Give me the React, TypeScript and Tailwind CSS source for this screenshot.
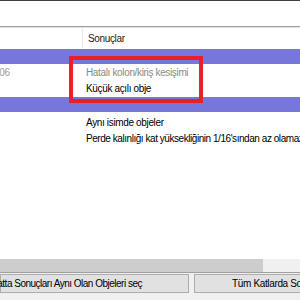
import React from 'react'

const font = { fontFamily: '"Liberation Sans", Arial, sans-serif' }

const ResultRow = ({ text, className = '' }: { text: string; className?: string }) => (
  <div className={`flex h-[16px] items-center ${className}`}>
    <div className="w-[86px] shrink-0" />
    <span className="whitespace-nowrap">{text}</span>
  </div>
)

export default function App() {
  return (
    <div
      className="relative flex h-[300px] w-[300px] flex-col overflow-hidden bg-white text-[10px] tracking-[-0.35px] text-black"
      style={font}
    >
      <div className="h-px shrink-0 bg-[#3f3f3f]" />
      <div className="h-[25px] shrink-0" />
      <div className="h-px shrink-0 bg-[#a0a0a0]" />
      <div className="h-px shrink-0 bg-[#e3e3e3]" />

      {/* column header */}
      <div className="flex h-[21px] shrink-0 items-center">
        <div className="h-[19px] w-[83px] shrink-0 border-r border-[#e5e5e5]" />
        <span className="pl-[5px] text-[#1a1a1a]">Sonuçlar</span>
      </div>

      <div className="h-[15px] shrink-0 bg-[#7777da]" />

      <div className="flex h-[33px] shrink-0 flex-col pt-[1px]">
        <div className="flex h-[15px] items-center">
          <div className="w-[86px] shrink-0">
            <span className="ml-[-6px] text-[#9a9a9a]">206</span>
          </div>
          <span className="whitespace-nowrap text-[#8a8a8a]">Hatalı kolon/kiriş kesişimi</span>
        </div>
        <div className="flex h-[17px] items-center">
          <div className="w-[86px] shrink-0" />
          <span className="whitespace-nowrap">Küçük açılı obje</span>
        </div>
      </div>

      <div className="h-[15px] shrink-0 bg-[#7777da]" />

      <div className="shrink-0 pt-[2px]">
        <ResultRow text="Aynı isimde objeler" />
        <ResultRow
          className="tracking-[-0.45px]"
          text="Perde kalınlığı kat yüksekliğinin 1/16'sından az olamaz"
        />
      </div>

      <div className="flex-1" />

      {/* horizontal scrollbar */}
      <div className="flex h-[13px] shrink-0 bg-[#f0f0f0]">
        <div className="w-[263px] bg-[#cdcdcd]" />
      </div>
      <div className="h-px shrink-0 bg-[#a0a0a0]" />

      {/* buttons */}
      <div className="flex h-[27px] shrink-0 gap-[5px] bg-[#f0f0f0] pt-[1px]">
        <div className="flex h-[19px] w-[189px] shrink-0 items-center justify-end border border-[#adadad] bg-[#e1e1e1] pr-[46px] tracking-[-0.5px]">
          <span className="whitespace-nowrap">Bu Katta Sonuçları Aynı Olan Objeleri seç</span>
        </div>
        <div className="flex h-[19px] w-[200px] shrink-0 items-center border border-[#adadad] bg-[#e1e1e1] pl-[37px]">
          <span className="whitespace-nowrap">Tüm Katlarda Sonuçları Aynı Olan Objeleri seç</span>
        </div>
      </div>

      {/* red annotation box */}
      <div className="absolute left-[69px] top-[56px] h-[47px] w-[134px] border-[4px] border-[#e8202a]" />
    </div>
  )
}
